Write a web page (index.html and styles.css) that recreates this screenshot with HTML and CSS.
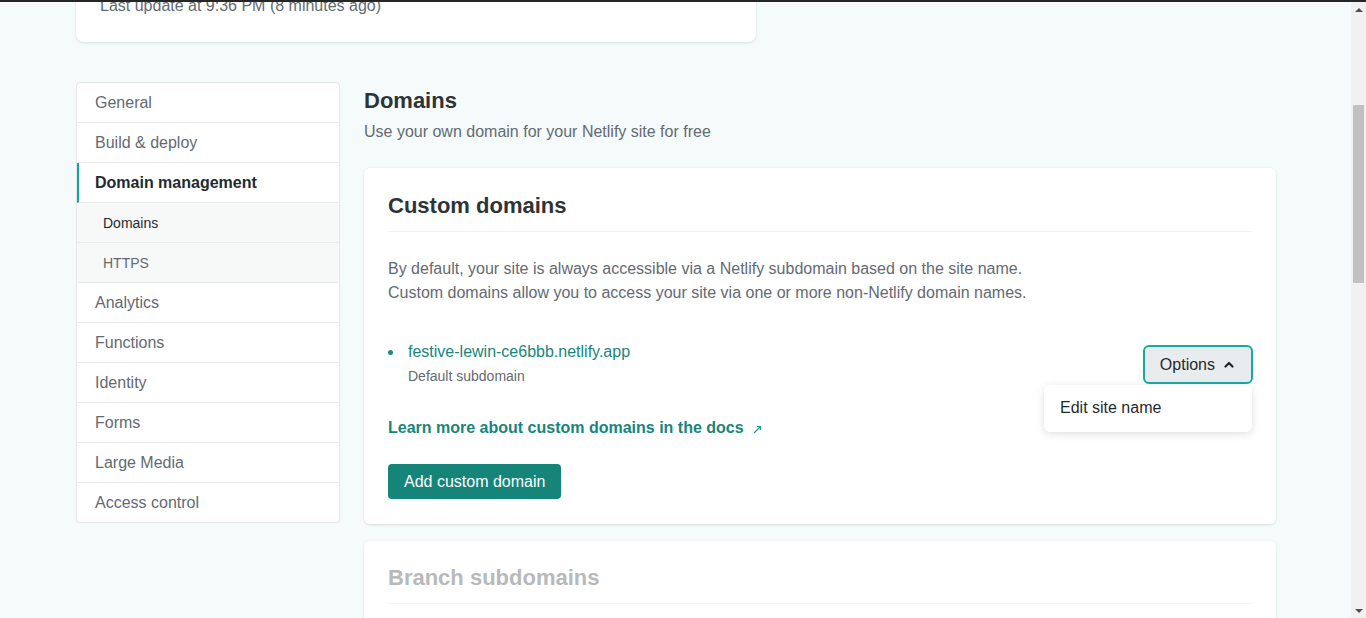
FILE: index.html
```html
<!DOCTYPE html>
<html lang="en">
<head>
<meta charset="utf-8">
<title>Domain management</title>
<link rel="stylesheet" href="styles.css">
</head>
<body>
<div class="topbar"></div>
<div class="viewport">
  <div class="page">
    <div class="container">
      <div class="summary-card">
        <p class="summary-text">Last update at 9:36 PM (8 minutes ago)</p>
      </div>
      <div class="settings">
        <nav class="sidenav">
          <a class="nav-item">General</a>
          <a class="nav-item">Build &amp; deploy</a>
          <a class="nav-item active">Domain management</a>
          <a class="nav-item sub current">Domains</a>
          <a class="nav-item sub">HTTPS</a>
          <a class="nav-item">Analytics</a>
          <a class="nav-item">Functions</a>
          <a class="nav-item">Identity</a>
          <a class="nav-item">Forms</a>
          <a class="nav-item">Large Media</a>
          <a class="nav-item last">Access control</a>
        </nav>
        <main class="content">
          <h2 class="section-title">Domains</h2>
          <p class="section-sub">Use your own domain for your Netlify site for free</p>

          <section class="card">
            <h3 class="card-title">Custom domains</h3>
            <p class="card-text">By default, your site is always accessible via a Netlify subdomain based on the site name.<br>Custom domains allow you to access your site via one or more non-Netlify domain names.</p>
            <div class="domain-row">
              <div class="domain">
                <span class="dot"></span>
                <div class="domain-info">
                  <a class="domain-link">festive-lewin-ce6bbb.netlify.app</a>
                  <div class="domain-note">Default subdomain</div>
                </div>
              </div>
              <div class="options">
                <button class="options-btn">Options
                  <svg class="caret" width="10" height="7" viewBox="0 0 10 7"><path d="M1.5 5.5 L5 2 L8.5 5.5" fill="none" stroke="#1f2a30" stroke-width="2.2" stroke-linecap="round" stroke-linejoin="round"/></svg>
                </button>
                <div class="menu">
                  <div class="menu-item">Edit site name</div>
                </div>
              </div>
            </div>
            <a class="docs-link">Learn more about custom domains in the docs
              <svg class="ext" width="9" height="9" viewBox="0 0 9 9"><path d="M1 8 L7.5 1.5 M4 1.5 H7.5 V5" fill="none" stroke="#1a9a90" stroke-width="1.2"/></svg>
            </a>
            <div class="actions">
              <button class="primary-btn">Add custom domain</button>
            </div>
          </section>

          <section class="card faded">
            <h3 class="card-title">Branch subdomains</h3>
          </section>
        </main>
      </div>
    </div>
  </div>
  <div class="scrollbar">
    <div class="sb-arrow up"></div>
    <div class="sb-track"><div class="sb-thumb"></div></div>
    <div class="sb-arrow down"></div>
  </div>
</div>
</body>
</html>
```

FILE: styles.css
```css
* { box-sizing: border-box; }
html, body { margin: 0; padding: 0; }
body {
  width: 1366px;
  height: 618px;
  overflow: hidden;
  font-family: "Liberation Sans", Arial, sans-serif;
  font-size: 16px;
  color: #2d3b41;
  background: #f5fbfb;
}
.topbar { height: 2px; background: #262626; }
.viewport { display: flex; height: 616px; }
.page { flex: 1; overflow: hidden; background: #f5fbfb; }
.container { width: 1200px; margin-left: 76px; }

.summary-card {
  width: 680px;
  height: 60px;
  margin-top: -20px;
  padding: 12px 24px 24px;
  background: #fff;
  border-radius: 8px;
  box-shadow: 0 1px 3px rgba(0,0,0,.12);
}
.summary-text { margin: 0; line-height: 24px; color: #646a72; }

.settings { display: flex; gap: 24px; margin-top: 40px; align-items: flex-start; }

.sidenav {
  width: 264px;
  flex: none;
  display: flex;
  flex-direction: column;
  background: #fff;
  border: 1px solid #e3e7e8;
  border-radius: 4px;
  overflow: hidden;
}
.nav-item {
  height: 40px;
  display: flex;
  align-items: center;
  padding-left: 18px;
  border-bottom: 1px solid #e8ebec;
  color: #646a72;
  line-height: 20px;
}
.nav-item.last { border-bottom: none; height: 39px; }
.nav-item.active {
  font-weight: bold;
  color: #1f2a30;
  border-left: 2px solid #15a79d;
  padding-left: 16px;
}
.nav-item.sub {
  background: #f7f8f8;
  padding-left: 26px;
  font-size: 14px;
}
.nav-item.sub.current { color: #1f2a30; }

.content { width: 912px; padding-top: 5px; }
.section-title { margin: 0; font-size: 22px; line-height: 28px; font-weight: bold; color: #2d3338; }
.section-sub { margin: 5px 0 0; line-height: 24px; color: #646a72; }

.card {
  margin-top: 24px;
  background: #fff;
  border-radius: 6px;
  padding: 25px 24px 25px;
  box-shadow: 0 1px 3px rgba(0,0,0,.12);
}
.card-title {
  margin: 0;
  font-size: 22px;
  line-height: 26px;
  font-weight: bold;
  color: #2d3338;
  padding-bottom: 12px;
  border-bottom: 1px solid #eef1f1;
}
.card-text { margin: 25px 0 0; line-height: 24px; color: #646a72; }

.domain-row { display: flex; justify-content: space-between; align-items: flex-start; margin-top: 35px; }
.domain { display: flex; align-items: flex-start; }
.dot { width: 5px; height: 5px; border-radius: 50%; background: #1a8a80; margin: 10px 15px 0 0; }
.domain-link { display: block; line-height: 24px; color: #18857c; }
.domain-note { margin-top: 2px; font-size: 14px; line-height: 20px; color: #646a72; }

.options { position: relative; margin-top: 5px; margin-right: -1px; }
.options-btn {
  height: 39px;
  display: flex;
  align-items: center;
  gap: 9px;
  padding: 0 17px 0 15px;
  font-family: inherit;
  font-size: 16px;
  color: #1f2a30;
  background: #e9ecee;
  border: 2px solid #15ac9f;
  border-radius: 6px;
}
.caret { display: block; }
.menu {
  position: absolute;
  top: 40px;
  right: 1px;
  width: 208px;
  padding: 11px 16px 12px;
  background: #fff;
  border-radius: 6px;
  box-shadow: 0 2px 8px rgba(0,0,0,.13);
}
.menu-item { line-height: 24px; color: #1f2a30; }

.docs-link {
  display: block;
  margin-top: 30px;
  line-height: 24px;
  font-weight: bold;
  color: #18857c;
}
.ext { margin-left: 5px; vertical-align: -1px; }

.actions { margin-top: 24px; }
.primary-btn {
  height: 35px;
  padding: 0 16px;
  font-family: inherit;
  font-size: 16px;
  color: #fff;
  background: #15857a;
  border: none;
  border-radius: 4px;
}

.card.faded { margin-top: 17px; padding-top: 24px; padding-bottom: 40px; }
.card.faded .card-title { color: #b7b9ba; border-bottom-color: #f3f4f4; }

.scrollbar {
  width: 15px;
  flex: none;
  background: #f1f1f1;
  display: flex;
  flex-direction: column;
}
.sb-arrow { height: 15px; display: flex; align-items: center; justify-content: center; }
.sb-arrow::before {
  content: "";
  width: 0; height: 0;
  border-left: 4px solid transparent;
  border-right: 4px solid transparent;
}
.sb-arrow.up::before { border-bottom: 4px solid #505050; }
.sb-arrow.down::before { border-top: 4px solid #505050; }
.sb-track { flex: 1; padding: 88px 2px 0; }
.sb-thumb { height: 178px; background: #c1c1c1; }
```
